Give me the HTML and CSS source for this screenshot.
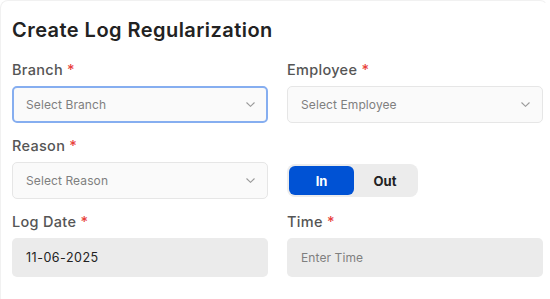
FILE: index.html
```html
<!DOCTYPE html>
<html lang="en">
<head>
<meta charset="utf-8">
<title>Create Log Regularization</title>
<link rel="stylesheet" href="styles.css">
</head>
<body>
<div class="card">
  <h1 class="title">Create Log Regularization</h1>
  <div class="grid">
    <div class="field">
      <label class="label">Branch <span class="req">*</span></label>
      <div class="select focused">
        <span class="placeholder">Select Branch</span>
        <svg class="chev" width="9" height="5" viewBox="0 0 9 5"><path d="M0.5 0.5 L4.5 4.3 L8.5 0.5" fill="none" stroke="#9a9a9a" stroke-width="1.1"/></svg>
      </div>
    </div>
    <div class="field">
      <label class="label">Employee <span class="req">*</span></label>
      <div class="select">
        <span class="placeholder">Select Employee</span>
        <svg class="chev" width="9" height="5" viewBox="0 0 9 5"><path d="M0.5 0.5 L4.5 4.3 L8.5 0.5" fill="none" stroke="#9a9a9a" stroke-width="1.1"/></svg>
      </div>
    </div>
    <div class="field">
      <label class="label">Reason <span class="req">*</span></label>
      <div class="select">
        <span class="placeholder">Select Reason</span>
        <svg class="chev" width="9" height="5" viewBox="0 0 9 5"><path d="M0.5 0.5 L4.5 4.3 L8.5 0.5" fill="none" stroke="#9a9a9a" stroke-width="1.1"/></svg>
      </div>
    </div>
    <div class="field toggle-field">
      <div class="toggle">
        <button class="seg active">In</button>
        <button class="seg">Out</button>
      </div>
    </div>
    <div class="field">
      <label class="label">Log Date <span class="req">*</span></label>
      <div class="input"><span class="value">11-06-2025</span></div>
    </div>
    <div class="field">
      <label class="label">Time <span class="req">*</span></label>
      <div class="input"><span class="placeholder">Enter Time</span></div>
    </div>
  </div>
</div>
</body>
</html>
```

FILE: styles.css
```css
html, body {
  margin: 0;
  padding: 0;
  background: #ffffff;
}
body {
  font-family: Inter, "Open Sans", sans-serif;
  width: 550px;
  height: 299px;
  overflow: hidden;
}
.card {
  box-sizing: border-box;
  width: 548px;
  height: 299px;
  border: 1px solid #f1f1f1;
  border-right-color: transparent;
  border-bottom: none;
  border-radius: 8px 8px 0 0;
  padding: 16px 0 0 11px;
}
.title {
  margin: 0 0 17px 0;
  font-size: 20px;
  line-height: 26px;
  font-weight: 600;
  color: #222222;
  letter-spacing: 0.45px;
}
.grid {
  display: grid;
  grid-template-columns: 256px 256px;
  column-gap: 19px;
  row-gap: 13px;
}
.field {
  display: flex;
  flex-direction: column;
}
.label {
  font-size: 14.5px;
  line-height: 20px;
  font-weight: 500;
  color: #555555;
  margin-bottom: 6px;
  letter-spacing: 0.3px;
}
.req {
  color: #e8403a;
}
.select {
  box-sizing: border-box;
  height: 37px;
  border: 1px solid #e6e6e6;
  border-radius: 5px;
  background: #fafafa;
  display: flex;
  align-items: center;
  justify-content: space-between;
  padding: 0 12px 0 13px;
}
.select.focused {
  border: 2px solid #86aef0;
  padding: 0 11px 0 12px;
}
.placeholder {
  font-size: 12px;
  color: #7f7f7f;
  letter-spacing: 0.1px;
}
.value {
  font-size: 12.5px;
  color: #222222;
  letter-spacing: 0.5px;
}
.chev {
  display: block;
}
.input {
  box-sizing: border-box;
  height: 39px;
  border-radius: 5px;
  background: #ebebeb;
  display: flex;
  align-items: center;
  padding: 0 14px;
}
.toggle-field {
  justify-content: flex-end;
  padding-bottom: 2px;
}
.toggle {
  display: flex;
  width: 131px;
  height: 33px;
  box-sizing: border-box;
  padding: 2px;
  background: #ececec;
  border-radius: 8px;
}
.seg {
  flex: 1;
  border: none;
  border-radius: 6px;
  background: transparent;
  font-family: inherit;
  font-size: 13px;
  font-weight: 700;
  color: #222222;
  padding: 0;
  cursor: pointer;
}
.seg.active {
  flex: 0 0 65px;
  background: #0052d4;
  color: #ffffff;
}
```
